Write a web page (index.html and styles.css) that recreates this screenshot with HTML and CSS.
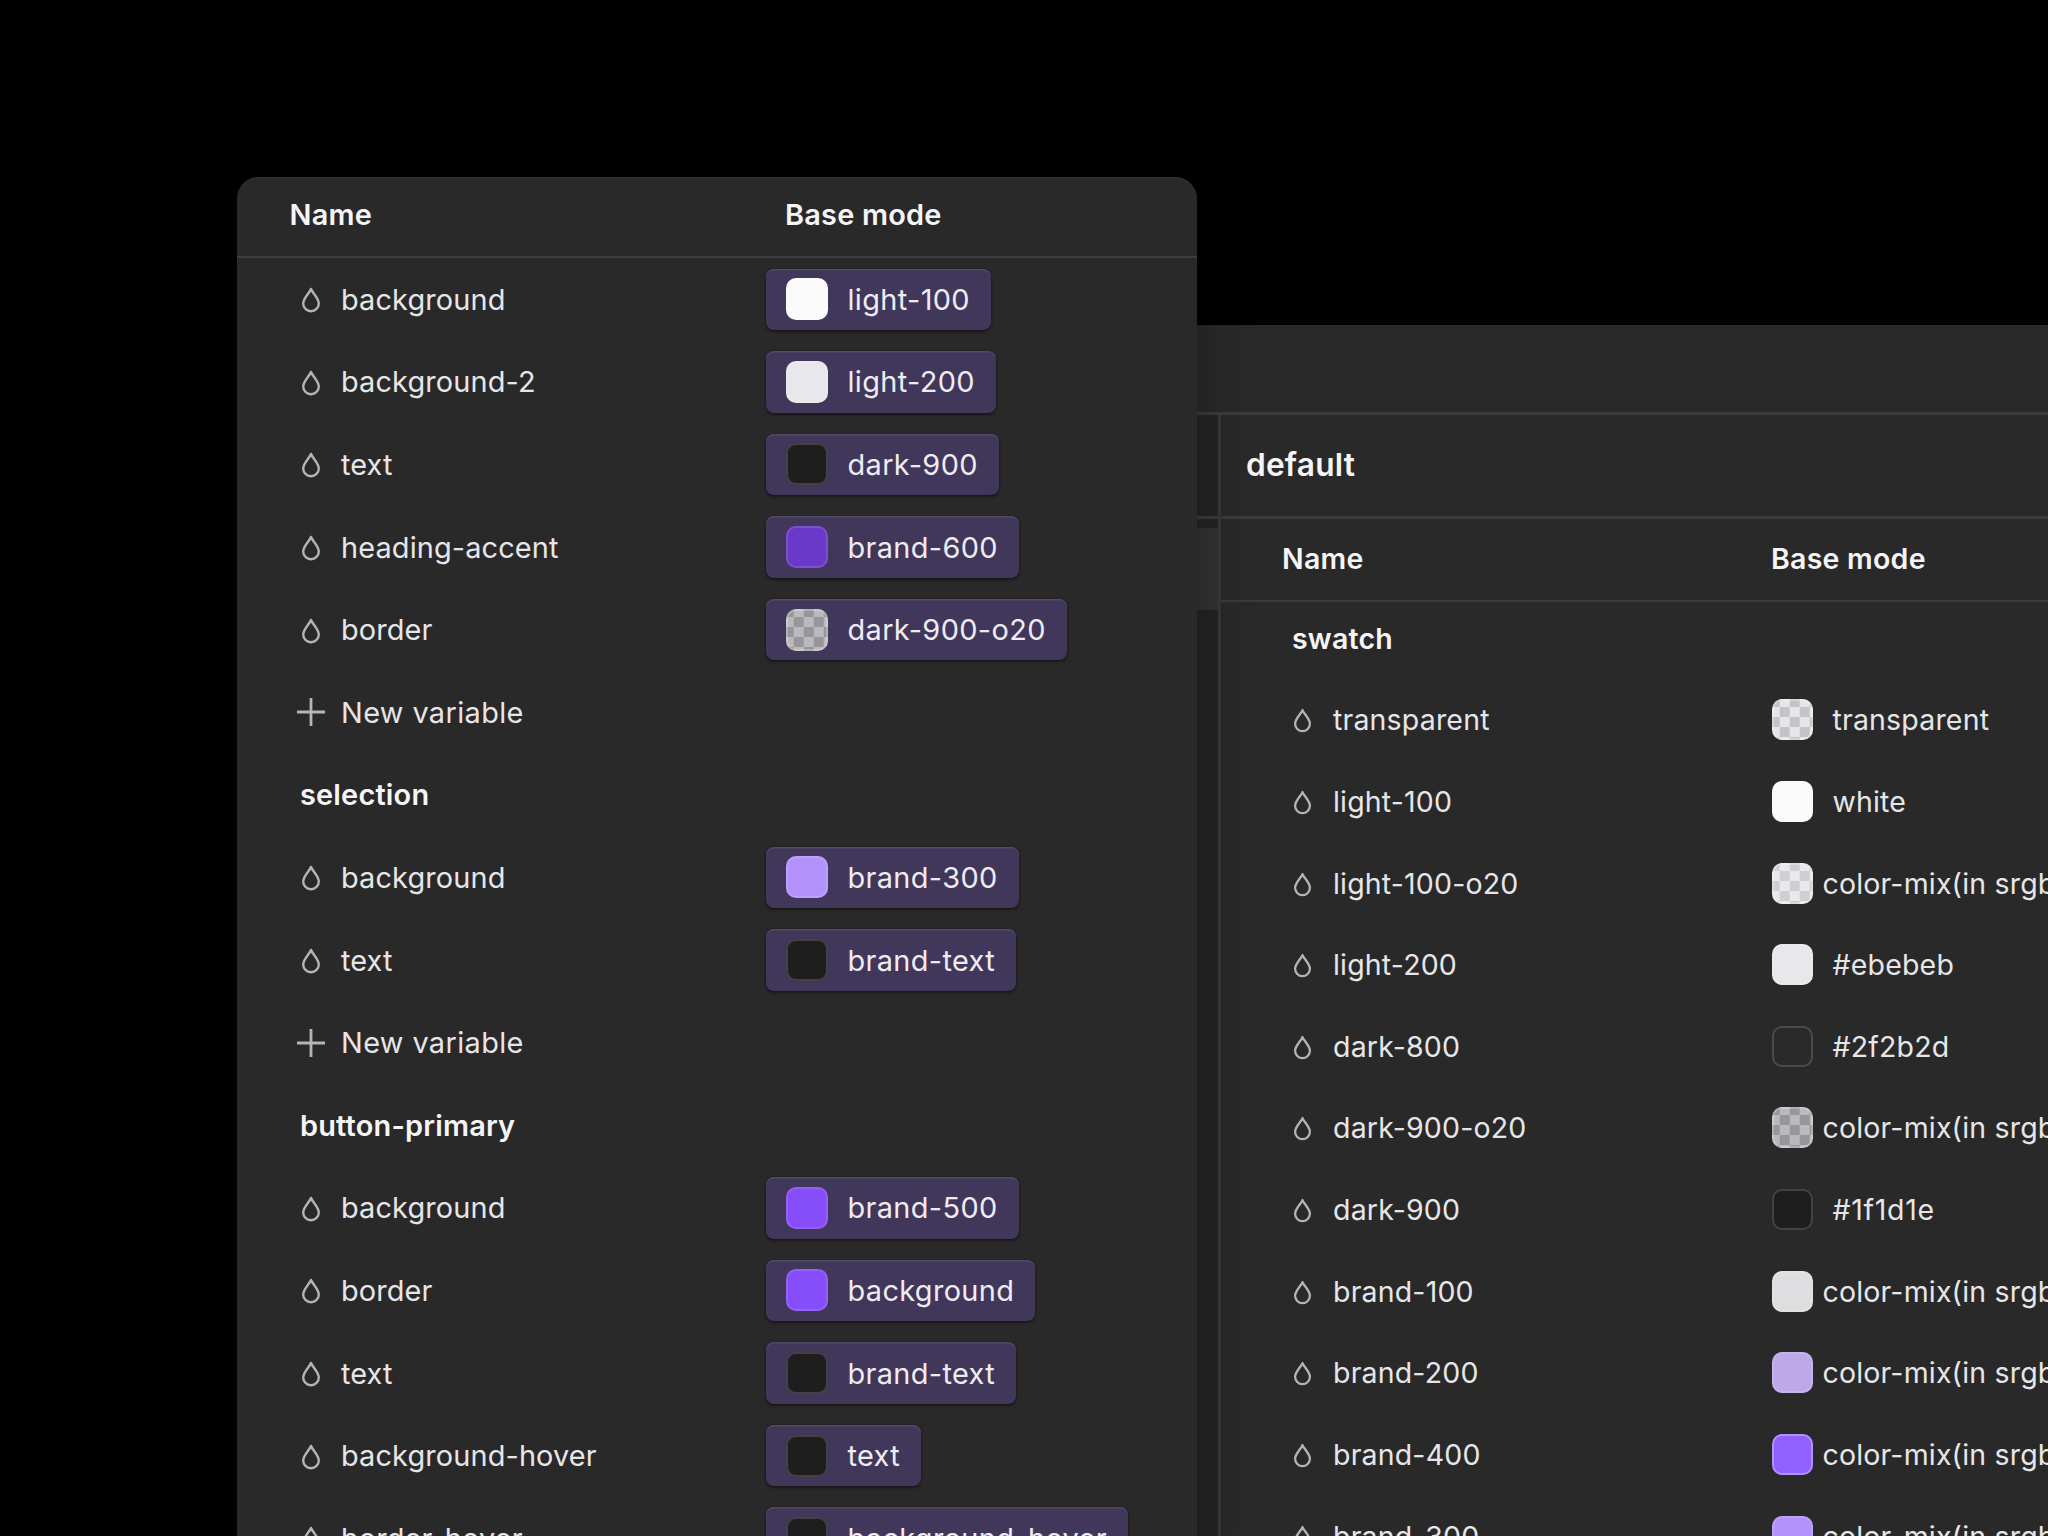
FILE: index.html
```html
<!DOCTYPE html>
<html lang="en">
<head>
<meta charset="utf-8">
<title>Variables</title>
<link rel="stylesheet" href="styles.css">
</head>
<body>
<svg class="defs" aria-hidden="true">
  <symbol id="drop" viewBox="0 0 20 26"><path d="M10 2C11.4 5.8 17.8 11.4 17.8 16.4A7.8 7.8 0 0 1 2.2 16.4C2.2 11.4 8.6 5.8 10 2Z" fill="none" stroke="currentColor" stroke-width="2.4" stroke-linejoin="round"/></symbol>
  <symbol id="plus" viewBox="0 0 28 28"><path d="M14 0V28M0 14H28" fill="none" stroke="currentColor" stroke-width="2.8"/></symbol>
</svg>
<main class="canvas">
  <section class="window window-back">
    <div class="titlebar"></div>
    <div class="body">
      <aside class="sidebar"><div class="side-top"></div><div class="side-item"></div></aside>
      <div class="content">
        <h2 class="collection">default</h2>
        <div class="row head"><span class="name">Name</span><span>Base mode</span></div>
        <div class="row group">swatch</div>
        <div class="row"><svg class="drop"><use href="#drop"/></svg><span class="name">transparent</span><i class="sw checker c-clear"></i><span class="val">transparent</span></div>
        <div class="row"><svg class="drop"><use href="#drop"/></svg><span class="name">light-100</span><i class="sw c-white"></i><span class="val">white</span></div>
        <div class="row"><svg class="drop"><use href="#drop"/></svg><span class="name">light-100-o20</span><i class="sw checker c-light20"></i><span class="val fn">color-mix(in srgb</span></div>
        <div class="row"><svg class="drop"><use href="#drop"/></svg><span class="name">light-200</span><i class="sw c-light200"></i><span class="val">#ebebeb</span></div>
        <div class="row"><svg class="drop"><use href="#drop"/></svg><span class="name">dark-800</span><i class="sw c-dark800"></i><span class="val">#2f2b2d</span></div>
        <div class="row"><svg class="drop"><use href="#drop"/></svg><span class="name">dark-900-o20</span><i class="sw checker c-dark20"></i><span class="val fn">color-mix(in srgb</span></div>
        <div class="row"><svg class="drop"><use href="#drop"/></svg><span class="name">dark-900</span><i class="sw c-dark900"></i><span class="val wide">#1f1d1e</span></div>
        <div class="row"><svg class="drop"><use href="#drop"/></svg><span class="name">brand-100</span><i class="sw c-brand100"></i><span class="val fn">color-mix(in srgb</span></div>
        <div class="row"><svg class="drop"><use href="#drop"/></svg><span class="name">brand-200</span><i class="sw c-brand200"></i><span class="val fn">color-mix(in srgb</span></div>
        <div class="row"><svg class="drop"><use href="#drop"/></svg><span class="name">brand-400</span><i class="sw c-brand400"></i><span class="val fn">color-mix(in srgb</span></div>
        <div class="row"><svg class="drop"><use href="#drop"/></svg><span class="name">brand-300</span><i class="sw c-brand300"></i><span class="val fn">color-mix(in srgb</span></div>
      </div>
    </div>
  </section>

  <section class="window window-front">
    <div class="row head"><span class="name">Name</span><span>Base mode</span></div>
    <div class="row"><svg class="drop"><use href="#drop"/></svg><span class="name">background</span><span class="chip"><i class="sw c-white"></i>light-100</span></div>
    <div class="row"><svg class="drop"><use href="#drop"/></svg><span class="name">background-2</span><span class="chip"><i class="sw c-light200"></i>light-200</span></div>
    <div class="row"><svg class="drop"><use href="#drop"/></svg><span class="name">text</span><span class="chip"><i class="sw c-dark900"></i>dark-900</span></div>
    <div class="row"><svg class="drop"><use href="#drop"/></svg><span class="name">heading-accent</span><span class="chip"><i class="sw c-brand600"></i>brand-600</span></div>
    <div class="row"><svg class="drop"><use href="#drop"/></svg><span class="name">border</span><span class="chip"><i class="sw checker c-dark20"></i>dark-900-o20</span></div>
    <div class="row new"><svg class="plus"><use href="#plus"/></svg><span class="name">New variable</span></div>
    <div class="row group">selection</div>
    <div class="row"><svg class="drop"><use href="#drop"/></svg><span class="name">background</span><span class="chip"><i class="sw c-brand300"></i>brand-300</span></div>
    <div class="row"><svg class="drop"><use href="#drop"/></svg><span class="name">text</span><span class="chip"><i class="sw c-dark900"></i>brand-text</span></div>
    <div class="row new"><svg class="plus"><use href="#plus"/></svg><span class="name">New variable</span></div>
    <div class="row group">button-primary</div>
    <div class="row"><svg class="drop"><use href="#drop"/></svg><span class="name">background</span><span class="chip"><i class="sw c-brand500"></i>brand-500</span></div>
    <div class="row"><svg class="drop"><use href="#drop"/></svg><span class="name">border</span><span class="chip"><i class="sw c-brand500"></i>background</span></div>
    <div class="row"><svg class="drop"><use href="#drop"/></svg><span class="name">text</span><span class="chip"><i class="sw c-dark900"></i>brand-text</span></div>
    <div class="row"><svg class="drop"><use href="#drop"/></svg><span class="name">background-hover</span><span class="chip"><i class="sw c-dark900"></i>text</span></div>
    <div class="row"><svg class="drop"><use href="#drop"/></svg><span class="name">border-hover</span><span class="chip"><i class="sw c-dark900"></i>background-hover</span></div>
  </section>
</main>
</body>
</html>
```
FILE: styles.css
```css
* { box-sizing: border-box; }
body { margin: 0; background: #000; }
.defs { position: absolute; width: 0; height: 0; }
.canvas {
  position: relative;
  width: 2048px;
  height: 1536px;
  overflow: hidden;
  background: #000;
  color: #e6e6e9;
  font-family: Inter, "Liberation Sans", sans-serif;
  white-space: nowrap;
}
.window { position: absolute; background: #292929; overflow: hidden; }

.row { display: flex; align-items: center; }
.head, .group, .collection { color: #f5f5f7; font-weight: 600; }
.drop { width: 20px; height: 26px; margin-top: 2px; flex: none; color: #b4b4b6; }
.plus { width: 28px; height: 28px; flex: none; color: #b4b4b6; }
.name { flex: none; }

/* front window */
.window-front {
  left: 237px;
  top: 177px;
  width: 960px;
  height: 1400px;
  border-radius: 22px 22px 0 0;
  box-shadow: 0 10px 56px rgba(0, 0, 0, .3), inset 0 1px 0 #323232;
  font-size: 28.9px;
  letter-spacing: .13px;
}
.window-front .row { height: 82.6px; padding-left: 63.5px; }
.window-front .drop { margin-right: 20.5px; }
.window-front .plus { margin: 0 16.5px 0 -4px; }
.window-front .name { width: 424.5px; }
.window-front .new .name { letter-spacing: .38px; }
.window-front .group { padding-left: 63px; letter-spacing: .2px; }
.window-front .head { height: 81px; padding: 0 0 4px 52.5px; border-bottom: 2px solid #3d3d40; letter-spacing: .22px; }
.window-front .head .name { width: 495.5px; }

.chip {
  display: flex;
  align-items: center;
  height: 61.5px;
  padding: 0 21px 0 20px;
  gap: 20px;
  border-radius: 8px;
  background: #41375b;
  color: #eeecf2;
  letter-spacing: .36px;
  box-shadow: inset 0 1.5px 0 #50496a, 0 2px 3px rgba(0, 0, 0, .4), 0 0 2px rgba(0, 0, 0, .3);
}

/* back window */
.window-back {
  left: 1100px;
  top: 325px;
  width: 960px;
  height: 1300px;
  font-size: 28.5px;
  letter-spacing: .18px;
}
.titlebar { height: 90px; border-bottom: 3px solid #3b3b3e; }
.body { display: flex; }
.sidebar { flex: none; width: 121px; height: 1211px; border-right: 3px solid #38383a; background: #242424; }
.side-top { height: 104px; border-bottom: 3px solid #3b3b3e; }
.side-item { height: 82px; margin-top: 9px; background: #323232; }
.content { flex: 1; min-width: 0; }
.collection { margin: 0; height: 104px; padding: 0 0 2px 25px; display: flex; align-items: center; border-bottom: 3px solid #3b3b3e; font-size: 31.7px; }
.window-back .row { height: 81.63px; padding-left: 72px; }
.window-back .drop { width: 19px; height: 25px; margin-right: 21px; }
.window-back .name { width: 438.5px; }
.window-back .head { height: 83px; padding: 0 0 2px 61px; border-bottom: 2px solid #3b3b3e; letter-spacing: .25px; }
.window-back .head .name { width: 489px; }
.window-back .group { height: 77px; padding: 0 0 4px 71px; }
.val { margin-left: 20px; }
.val.fn { margin-left: 10px; }
.val.wide { letter-spacing: .7px; }

/* swatches */
.sw { flex: none; width: 42px; height: 42px; border-radius: 10px; border: 2px solid rgba(255, 255, 255, .12); background-origin: border-box; background-clip: border-box; }
.window-back .sw { width: 41px; height: 41px; }
.c-white { background-color: #fbfbfb; }
.c-light200 { background-color: #e8e8ea; }
.c-dark800 { background-color: #2a2a2a; border-color: #4b4b4d; }
.c-dark900 { background-color: #1e1e1e; border-color: #434145; }
.c-brand100 { background-color: #dedee0; }
.c-brand200 { background-color: #bda9ea; }
.c-brand300 { background-color: #b393fb; }
.c-brand400 { background-color: #9061ff; border-color: rgba(255, 255, 255, .3); }
.c-brand500 { background-color: #864dfb; }
.c-brand600 { background-color: #6a39c9; }
.checker { background-position: -12.3px -2px; background-size: 20px 20px; border-color: rgba(255, 255, 255, .25); }
.c-clear { background-image: conic-gradient(#c4c4c7 25%, #e6e6e9 0 50%, #c4c4c7 0 75%, #e6e6e9 0); }
.c-light20 { background-image: conic-gradient(#cfcfd2 25%, #e9e9eb 0 50%, #cfcfd2 0 75%, #e9e9eb 0); }
.c-dark20 { background-image: conic-gradient(#97969a 25%, #bababd 0 50%, #97969a 0 75%, #bababd 0); }
```
